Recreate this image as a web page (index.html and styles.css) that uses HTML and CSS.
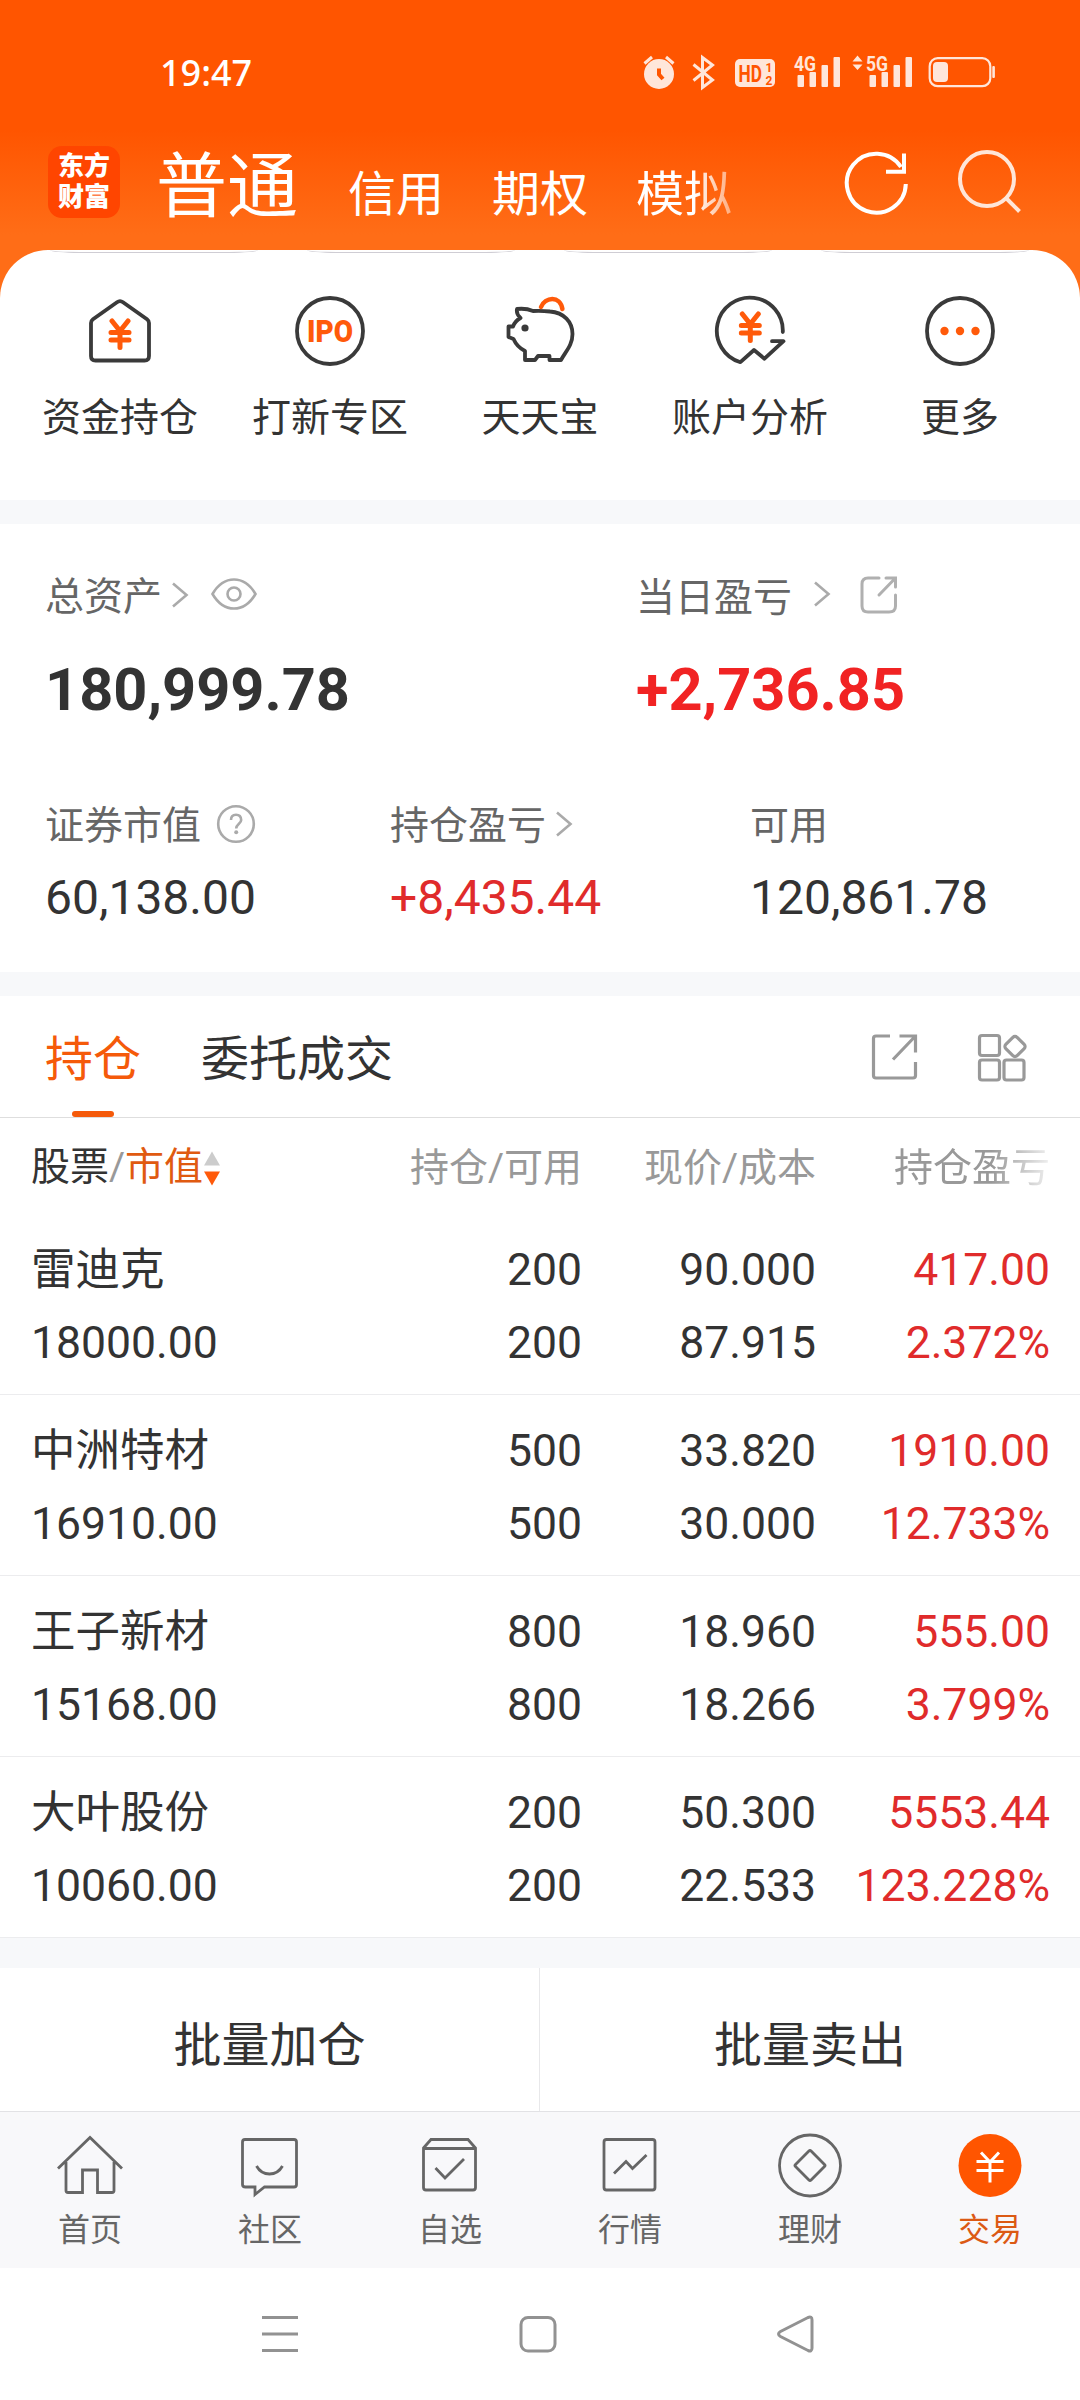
FILE: index.html
```html
<!DOCTYPE html>
<html lang="zh-CN">
<head>
    <meta charset="UTF-8">
    <meta name="viewport" content="width=device-width, initial-scale=1.0">
    <title>交易 - 持仓</title>
    <link rel="stylesheet" href="styles.css">
</head>
<body>

    <!-- 公用图标 -->
    <svg class="defs" width="0" height="0">
        <symbol id="chevron" viewBox="0 0 18 28"><path d="M2 2.5 15.5 14 2 25.5" fill="none" stroke="#aaa" stroke-width="2.6"/></symbol>
        <symbol id="yen" viewBox="0 0 24 32"><path d="M4 3 12 13 20 3M3 14.5H21M3 22H21M12 13V29.5" fill="none" stroke="#ff5a0a" stroke-width="5" stroke-linecap="round"/></symbol>
    </svg>

    <header class="top">
        <div class="status">
            <span class="clock">19:47</span>
            <svg class="status-icons" width="360" height="44" viewBox="0 0 360 44">
                <g fill="#ffe6da">
                    <circle cx="19" cy="24" r="15"/>
                    <rect x="95" y="9" width="40" height="28" rx="5"/>
                    <rect x="157.5" y="25" width="6.5" height="12" rx="1"/>
                    <rect x="169.5" y="22" width="6.5" height="15" rx="1"/>
                    <rect x="181.5" y="15" width="6.5" height="22" rx="1"/>
                    <rect x="193.5" y="7" width="6.5" height="30" rx="1"/>
                    <rect x="229.5" y="25" width="6.5" height="12" rx="1"/>
                    <rect x="241.5" y="22" width="6.5" height="15" rx="1"/>
                    <rect x="253.5" y="15" width="6.5" height="22" rx="1"/>
                    <rect x="265.5" y="7" width="6.5" height="30" rx="1"/>
                    <path d="M212.5 11.5 217.5 5.5 222.5 11.5zM212.5 14.5 217.5 20 222.5 14.5z"/>
                    <rect x="293" y="12" width="15" height="20" rx="4"/>
                    <rect x="352.3" y="16" width="2.6" height="12" rx="1"/>
                    <text class="net" x="154" y="20.5" textLength="22" lengthAdjust="spacingAndGlyphs">4G</text>
                    <text class="net" x="226" y="20.5" textLength="22" lengthAdjust="spacingAndGlyphs">5G</text>
                </g>
                <g fill="none" stroke="#ffe6da" stroke-width="3">
                    <path d="M4.5 13.5 12 7M26 7 33.5 13.5"/>
                    <path d="M53.5 14.5 72.5 30 62.5 37.5V7.5L72.5 15 53.5 30.5"/>
                    <rect x="289.7" y="8.2" width="60.6" height="28" rx="8" stroke-width="2.2"/>
                </g>
                <path d="M19 18.5V24.5L23 29" fill="none" stroke="#ff5500" stroke-width="4"/>
                <g fill="#ff5500">
                    <text class="hd" transform="translate(98.5 31.5) scale(.72 1)">HD</text>
                    <text class="hd-num" x="125.5" y="21.5">1</text>
                    <text class="hd-num" x="125.5" y="34.7">2</text>
                </g>
            </svg>
        </div>
        <div class="title-bar">
            <div class="logo">东方<br>财富</div>
            <nav class="accounts">
                <span class="current">普通</span>
                <span>信用</span>
                <span>期权</span>
                <span class="fade">模拟</span>
            </nav>
            <svg class="refresh" width="70" height="70" viewBox="0 0 70 70" fill="none" stroke="#fff" stroke-width="4">
                <path d="M64.8 36A29.5 29.5 0 1 1 60 19"/>
                <path d="M63 5.5V23.7H45"/>
            </svg>
            <svg class="search" width="70" height="70" viewBox="0 0 70 70" fill="none" stroke="#ffe6d8" stroke-width="4">
                <circle cx="32" cy="31" r="27"/>
                <path d="M50.5 49.5 64.5 63.5"/>
            </svg>
        </div>
    </header>

    <section class="shortcuts">
        <div class="card-edges"><i></i><i></i><i></i><i></i></div>
        <a class="shortcut">
            <svg width="80" height="80" viewBox="0 0 80 80">
                <path d="M37 11.2Q40 9 43 11.2L67 28.3Q69 29.8 69 32V65Q69 69.5 64.5 69.5H15.5Q11 69.5 11 65V32Q11 29.8 13 28.3Z" fill="none" stroke="#3a3a3a" stroke-width="3.8"/>
                <use href="#yen" x="28" y="27" width="24" height="32"/>
            </svg>
            资金持仓
        </a>
        <a class="shortcut">
            <svg width="80" height="80" viewBox="0 0 80 80">
                <circle cx="40" cy="40" r="33" fill="none" stroke="#3a3a3a" stroke-width="3.8"/>
                <text class="ipo" x="17" y="51.3" textLength="46" lengthAdjust="spacingAndGlyphs">IPO</text>
            </svg>
            打新专区
        </a>
        <a class="shortcut">
            <svg width="80" height="80" viewBox="0 0 80 80" fill="none" stroke="#3a3a3a" stroke-width="3.8" stroke-linejoin="round">
                <path d="M20.5 27Q16 23 17 18Q26 17 33 20Q41 19.5 50 20.5C64 21.5 72.5 31 72.5 43C72.5 54 66 60 61 69H49.5V65H38L35 69H25V60Q17 56 13.5 48L8.5 46V35.5H13Q15 30 20.5 27Z"/>
                <circle cx="25" cy="37" r="3.6" fill="#3a3a3a" stroke="none"/>
                <path d="M41 16C45 6 60 4 62.4 18" stroke="#ff5a0a" stroke-width="4.5" stroke-linecap="round"/>
            </svg>
            天天宝
        </a>
        <a class="shortcut">
            <svg width="80" height="80" viewBox="0 0 80 80">
                <path d="M72.8 41A33 33 0 1 0 30.4 71.2L44 59 54.5 67.7 73.5 50.2H62" fill="none" stroke="#3a3a3a" stroke-width="3.8" stroke-linecap="round" stroke-linejoin="round"/>
                <use href="#yen" x="28.3" y="20" width="24" height="32"/>
            </svg>
            账户分析
        </a>
        <a class="shortcut">
            <svg width="80" height="80" viewBox="0 0 80 80">
                <circle cx="40" cy="40" r="33" fill="none" stroke="#3a3a3a" stroke-width="3.8"/>
                <g fill="#ff5a0a"><circle cx="24.5" cy="40" r="4.2"/><circle cx="40" cy="40" r="4.2"/><circle cx="55.5" cy="40" r="4.2"/></g>
            </svg>
            更多
        </a>
    </section>

    <section class="assets">
        <div class="totals">
            <div>
                <div class="label">
                    总资产<svg class="chev" width="18" height="28"><use href="#chevron"/></svg>
                    <svg class="eye" width="46" height="34" viewBox="0 0 46 34" fill="none" stroke="#aaa" stroke-width="2.6">
                        <path d="M1.5 17Q10 2.5 23 2.5T44.5 17Q36 31.5 23 31.5T1.5 17Z"/>
                        <circle cx="23" cy="17" r="6.5"/>
                    </svg>
                </div>
                <div class="total">180,999.78</div>
            </div>
            <div>
                <div class="label day">
                    当日盈亏<svg class="chev" width="18" height="28"><use href="#chevron"/></svg>
                    <svg class="share" width="40" height="40" viewBox="0 0 40 40" fill="none" stroke="#b0b0b0" stroke-width="3" stroke-linecap="round">
                        <path d="M20 3H9Q3 3 3 9V31Q3 37 9 37H30Q36.5 37 36.5 31V20"/>
                        <path d="M27 3H36.5V12M36 3.5 20 20"/>
                    </svg>
                </div>
                <div class="total up">+2,736.85</div>
            </div>
        </div>
        <div class="details">
            <div>
                <div class="label">
                    证券市值
                    <svg class="help" width="40" height="40" viewBox="0 0 40 40">
                        <circle cx="20" cy="20" r="17.8" fill="none" stroke="#aaa" stroke-width="2.6"/>
                        <path d="M15 16Q15 10.8 20 10.8T25.2 16C25.2 19.5 20.2 20 20.2 24.5" fill="none" stroke="#aaa" stroke-width="2.6"/>
                        <circle cx="20.2" cy="28.3" r="2" fill="#aaa"/>
                    </svg>
                </div>
                <div class="value">60,138.00</div>
            </div>
            <div>
                <div class="label">持仓盈亏<svg class="chev" width="18" height="28"><use href="#chevron"/></svg></div>
                <div class="value up">+8,435.44</div>
            </div>
            <div>
                <div class="label">可用</div>
                <div class="value">120,861.78</div>
            </div>
        </div>
    </section>

    <section class="holdings">
        <div class="tabs">
            <span class="tab active">持仓</span>
            <span class="tab">委托成交</span>
            <svg class="export" width="50" height="50" viewBox="0 0 50 50" fill="none" stroke="#999" stroke-width="3.2">
                <path d="M20 3H6Q3.5 3 3.5 5.5V42.5Q3.5 45 6 45H43Q45.5 45 45.5 42.5V29"/>
                <path d="M29.5 3H45.5V19.5M45 3.5 23 26.5"/>
            </svg>
            <svg class="grid-icon" width="50" height="50" viewBox="0 0 50 50" fill="none" stroke="#999" stroke-width="3.2">
                <rect x="2.5" y="2.5" width="20" height="20" rx="2.5"/>
                <rect x="2.5" y="27" width="20" height="20" rx="2.5"/>
                <rect x="27" y="27" width="20" height="20" rx="2.5"/>
                <rect x="30" y="5.5" width="16" height="16" rx="3" transform="rotate(45 38 13.5)"/>
            </svg>
        </div>

        <div class="row head">
            <div class="sort"><b>股票</b>/<em>市值</em>
                <svg width="18" height="36" viewBox="0 0 18 36"><path d="M1 14.5 9 .5 17 14.5z" fill="#ccc"/><path d="M1 20.5H17L9 34.5z" fill="#ff5a0a"/></svg>
            </div>
            <div>持仓/可用</div>
            <div>现价/成本</div>
            <div class="cut">持仓盈亏</div>
        </div>
        <div class="row">
            <div>雷迪克<br>18000.00</div>
            <div>200<br>200</div>
            <div>90.000<br>87.915</div>
            <div class="up">417.00<br>2.372%</div>
        </div>
        <div class="row">
            <div>中洲特材<br>16910.00</div>
            <div>500<br>500</div>
            <div>33.820<br>30.000</div>
            <div class="up">1910.00<br>12.733%</div>
        </div>
        <div class="row">
            <div>王子新材<br>15168.00</div>
            <div>800<br>800</div>
            <div>18.960<br>18.266</div>
            <div class="up">555.00<br>3.799%</div>
        </div>
        <div class="row">
            <div>大叶股份<br>10060.00</div>
            <div>200<br>200</div>
            <div>50.300<br>22.533</div>
            <div class="up">5553.44<br>123.228%</div>
        </div>
    </section>

    <div class="batch">
        <button type="button">批量加仓</button>
        <button type="button">批量卖出</button>
    </div>

    <nav class="tabbar">
        <a>
            <svg width="72" height="72" viewBox="0 0 72 72"><path d="M4 39.5 36 8.5 68 39.5M12 33V61.5Q12 63.5 14 63.5H28.5V41H43.5V63.5H58Q60 63.5 60 61.5V33"/></svg>
            首页
        </a>
        <a>
            <svg width="72" height="72" viewBox="0 0 72 72"><path d="M11 10.5H60Q62.5 10.5 62.5 13V55.5Q62.5 58 60 58H30.5L21 65.5V58H11.5Q8.5 58 8.5 55.5V13Q8.5 10.5 11 10.5ZM22.5 37Q27 45 35.5 45T48.5 37"/></svg>
            社区
        </a>
        <a>
            <svg width="72" height="72" viewBox="0 0 72 72"><path d="M9.5 19 17 10.5H54L61.5 19V58.5Q61.5 61 59 61H12Q9.5 61 9.5 58.5ZM9.5 19.5H61.5M21.5 39 31 49 50 30"/></svg>
            自选
        </a>
        <a>
            <svg width="72" height="72" viewBox="0 0 72 72"><rect x="10" y="10.5" width="51" height="50.5" rx="2.5"/><path d="M20 44.5 32 32.5 38.5 39.5 52.5 26"/></svg>
            行情
        </a>
        <a>
            <svg width="72" height="72" viewBox="0 0 72 72"><circle cx="36" cy="36.5" r="30.5"/><rect x="25" y="25.5" width="22" height="22" rx="1.5" transform="rotate(45 36 36.5)"/></svg>
            理财
        </a>
        <a class="on">
            <svg width="72" height="72" viewBox="0 0 72 72"><circle class="disc" cx="36" cy="36.5" r="31.5"/><path class="mark" d="M27 23.5 36 33 45 23.5M22.5 32.5H49.5M22.5 41.5H49.5M36 33V53.5"/></svg>
            交易
        </a>
    </nav>

    <div class="sysbar">
        <svg width="40" height="40" viewBox="0 0 40 40"><path d="M2 3.5H38M2 20H38M2 36.5H38"/></svg>
        <svg width="40" height="40" viewBox="0 0 40 40"><rect x="3" y="3.5" width="34" height="33.5" rx="7"/></svg>
        <svg width="40" height="40" viewBox="0 0 40 40"><path d="M32 3.5Q36 1.8 36 6V34Q36 38 32 36.5L4.5 22.5Q0.5 20 4.5 17.5Z"/></svg>
    </div>

</body>
</html>
```
FILE: styles.css
```css
* { box-sizing: border-box; }
body { margin: 0; width: 1080px; height: 2400px; background: #fff; color: #333; font-family: Roboto, 'Noto Sans CJK SC', sans-serif; overflow: hidden; }
svg { display: block; flex: none; }
.defs { position: absolute; }
.up { color: #e02b2b; }

/* 顶部 */
.top { height: 300px; background: linear-gradient(#ff5500 130px, #ff6d17 235px); color: #fff; }
.status { height: 132px; padding: 50px 80px 0 160px; display: flex; justify-content: space-between; }
.clock { font: 500 36px/46px 'Noto Sans', sans-serif; }
.net { font: 700 20px Roboto, sans-serif; }
.hd { font: 700 24px Roboto, sans-serif; }
.hd-num { font: 700 12px Roboto, sans-serif; }

.title-bar { display: flex; padding-left: 48px; height: 118px; }
.logo { width: 72px; height: 72px; margin-top: 14px; padding-top: 5px; border-radius: 14px; background: #ff4500; font-size: 26px; line-height: 31px; font-weight: 900; text-align: center; }
.accounts { display: flex; align-items: baseline; gap: 48px; margin-left: 36px; padding-top: 5px; width: 690px; font-size: 48px; line-height: 100px; }
.accounts .current { font-size: 71px; margin-right: 2px; }
.fade { -webkit-mask-image: linear-gradient(90deg, #000 60%, rgba(0,0,0,.45)); mask-image: linear-gradient(90deg, #000 60%, rgba(0,0,0,.45)); }
.refresh { margin: 16px 0 0 -5px; }
.search { margin: 16px 0 0 44px; }

/* 快捷入口 */
.shortcuts { position: relative; display: flex; height: 250px; margin-top: -50px; padding: 41px 15px 0; background: #fff; border-radius: 48px 48px 0 0; }
.shortcut { width: 210px; display: flex; flex-direction: column; align-items: center; font-size: 39px; line-height: 56px; gap: 19px; }
.card-edges { position: absolute; left: 50px; top: 0; display: flex; gap: 49px; }
.card-edges i { width: 208px; height: 3px; border-bottom: 1px solid #cfcdd4; border-radius: 0 0 30px 30px / 0 0 3px 3px; }
.ipo { font: 900 32px Roboto, sans-serif; fill: #ff5a0a; }

/* 资产 */
.assets { height: 496px; padding: 41px 0 0 45px; border: solid #f7f8fa; border-width: 24px 0; }
.totals { display: grid; grid-template-columns: 591px 1fr; }
.details { display: grid; grid-template-columns: 345px 360px 1fr; margin-top: 69px; }
.label { display: flex; align-items: center; height: 56px; font-size: 39px; color: #666; }
.chev { margin: 4px 0 0 9px; }
.eye { margin: 1px 0 0 22px; }
.day { padding-top: 2px; }
.day .chev { margin: 0 0 0 21px; }
.share { margin: 2px 0 0 28px; }
.help { margin: 4px 0 0 15px; }
.total { margin-top: 34px; font-size: 59.5px; line-height: 70px; font-weight: 700; }
.total.up { color: #f12323; }
.value { margin-top: 18px; font-size: 48px; line-height: 60px; }

/* 持仓列表 */
.tabs { display: flex; align-items: center; height: 122px; padding-left: 45px; border-bottom: 1px solid #dedede; font-size: 48px; }
.tab { position: relative; height: 122px; line-height: 128px; margin-right: 60px; }
.active { color: #f55a0a; }
.active::after { content: ''; position: absolute; left: 27px; bottom: 1px; width: 42px; height: 6px; border-radius: 3px; background: #f55a0a; }
.export { margin: 3px 0 0 417px; }
.grid-icon { margin: 2px 0 0 57px; }
.row { display: grid; grid-template-columns: 316px 234px 235px 234px; height: 181px; padding: 20px 30px 0 31px; border-bottom: 1px solid #ececee; font-size: 44.5px; line-height: 73px; text-align: right; }
.row > :first-child { text-align: left; }
.row > :nth-child(2) { margin-right: -1px; }
.head { height: 96px; padding-top: 14px; border: 0; font-size: 39px; color: #999; }
.head b { font-weight: 400; color: #333; }
.head em { font-style: normal; color: #e05a10; }
.sort { display: flex; align-items: center; height: 71px; }
.sort svg { margin-top: 2px; }
.cut { -webkit-mask-image: linear-gradient(90deg, #000 75%, rgba(0,0,0,.15)); mask-image: linear-gradient(90deg, #000 75%, rgba(0,0,0,.15)); }

.batch { display: flex; height: 173px; border-top: 30px solid #f7f8fa; }
.batch button { width: 539px; padding: 2px 0 0; border: 0; background: #fff; color: #333; font: inherit; font-size: 48px; }
.batch button + button { width: 541px; border-left: 1px solid #e8e8ea; }

/* 底部导航 */
.tabbar { display: flex; height: 157px; padding-top: 17px; border-top: 1px solid #e2e2e5; background: #f8f8fa; }
.tabbar a { width: 180px; display: flex; flex-direction: column; align-items: center; gap: 6px; font-size: 32px; line-height: 46px; color: #666; }
.tabbar svg { fill: none; stroke: #666; stroke-width: 2.8; }
.tabbar .on { color: #dc5a14; }
.tabbar .disc { fill: #ff5500; stroke: none; }
.tabbar .mark { stroke: #fff; stroke-width: 3; }

.sysbar { display: flex; gap: 218px; height: 132px; padding: 46px 0 0 260px; background: #fff; }
.sysbar svg { fill: none; stroke: #929292; stroke-width: 3; }
```
